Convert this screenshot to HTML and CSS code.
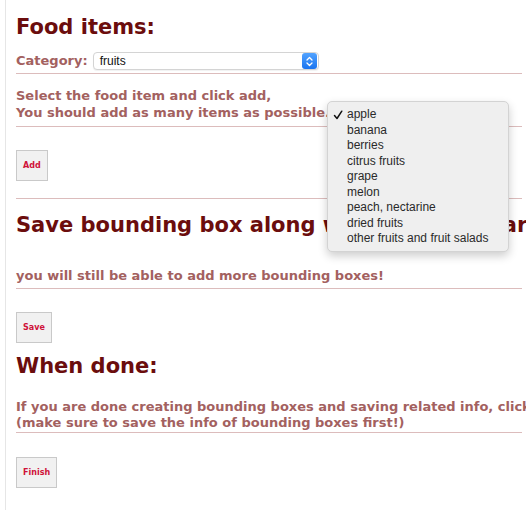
FILE: index.html
```html
<!DOCTYPE html>
<html lang="en">
<head>
<meta charset="utf-8">
<title>Food items</title>
<link rel="stylesheet" href="styles.css">
</head>
<body>
<div class="page">
  <h1 class="title first">Food items:</h1>

  <div class="field-row">
    <span class="label">Category:</span>
    <div class="select">
      <span class="select-value">fruits</span>
      <span class="select-arrow">
        <svg width="9" height="11" viewBox="0 0 9 11"><path d="M2 4 L4.5 1.5 L7 4 M2 7 L4.5 9.5 L7 7" fill="none" stroke="#fff" stroke-width="1.3" stroke-linecap="round" stroke-linejoin="round"/></svg>
      </span>
    </div>
  </div>
  <hr class="rule rule-category">

  <p class="note note-select">Select the food item and click add,<br>You should add as many items as possible.</p>
  <hr class="rule rule-select">

  <button class="btn btn-add">Add</button>
  <hr class="rule rule-add">

  <h1 class="title save-title">Save bounding box along with food item area:</h1>
  <p class="note note-save">you will still be able to add more bounding boxes!</p>
  <hr class="rule rule-save">

  <button class="btn btn-save">Save</button>

  <h1 class="title done-title">When done:</h1>
  <p class="note note-done">If you are done creating bounding boxes and saving related info, click the Finish button<br>(make sure to save the info of bounding boxes first!)</p>
  <hr class="rule rule-done">

  <button class="btn btn-finish">Finish</button>
</div>

<ul class="menu">
  <li class="menu-item checked"><svg class="check" width="10" height="10" viewBox="0 0 10 10"><path d="M1.5 5.5 L4 8.5 L8.8 1.2" fill="none" stroke="#111" stroke-width="1.5" stroke-linecap="round" stroke-linejoin="round"/></svg>apple</li>
  <li class="menu-item">banana</li>
  <li class="menu-item">berries</li>
  <li class="menu-item">citrus fruits</li>
  <li class="menu-item">grape</li>
  <li class="menu-item">melon</li>
  <li class="menu-item">peach, nectarine</li>
  <li class="menu-item">dried fruits</li>
  <li class="menu-item">other fruits and fruit salads</li>
</ul>
</body>
</html>
```

FILE: styles.css
```css
html, body {
  margin: 0;
  padding: 0;
  background: #ffffff;
  overflow: hidden;
}

body {
  width: 526px;
  height: 510px;
  position: relative;
  font-family: "DejaVu Sans", Verdana, sans-serif;
}

.page {
  margin-left: 5px;
  border-left: 1px solid #e6e6e6;
  padding-left: 10px;
  padding-right: 4px;
  min-height: 510px;
  display: flex;
  flex-direction: column;
  align-items: flex-start;
}

.title {
  margin: 0;
  font-size: 21px;
  line-height: 26px;
  font-weight: bold;
  color: #6b0d0d;
  white-space: nowrap;
}

.first { margin-top: 14px; }
.save-title { margin-top: 13px; }
.done-title { margin-top: 10px; }

.field-row {
  margin-top: 12px;
  height: 18px;
  display: flex;
  align-items: center;
  gap: 5px;
}

.label,
.note {
  font-size: 13px;
  font-weight: bold;
  color: #a3615f;
}

.label { line-height: 18px; }

.select {
  width: 224px;
  height: 16px;
  border: 1px solid #d4d4d4;
  border-radius: 4px;
  background: #fff;
  display: flex;
  align-items: center;
  justify-content: space-between;
  box-shadow: 0 1px 1px rgba(0, 0, 0, 0.06);
}

.select-value {
  font-family: "Liberation Sans", Arial, sans-serif;
  font-size: 12px;
  color: #111;
  padding-left: 6px;
}

.select-arrow {
  width: 15px;
  height: 16px;
  margin-right: 1px;
  border-radius: 3px;
  background: linear-gradient(#52a3ff, #1a74f0);
  display: flex;
  align-items: center;
  justify-content: center;
}

.note {
  margin: 0;
  line-height: 17px;
  white-space: nowrap;
}

.rule {
  align-self: stretch;
  border: 0;
  height: 1px;
  margin: 0;
  background: #dcbcbc;
}

.rule-category { margin-top: 3px; }
.note-select { margin-top: 13px; }
.rule-select { margin-top: 5px; }
.btn-add { margin-top: 23px; }
.rule-add { margin-top: 17px; }
.note-save { margin-top: 29px; }
.rule-save { margin-top: 4px; }
.btn-save { margin-top: 23px; }
.note-done { margin-top: 20px; line-height: 16px; }
.rule-done { margin-top: 1px; }
.btn-finish { margin-top: 24px; height: 30px; }

.btn {
  height: 31px;
  padding: 0 6px;
  border: 1px solid #c9c9c9;
  background: #f1f1f1;
  font-family: "DejaVu Sans", Verdana, sans-serif;
  font-size: 8px;
  font-weight: bold;
  color: #cf1239;
}

/* open dropdown list of the category select */
.menu {
  position: absolute;
  left: 327px;
  top: 101px;
  width: 180px;
  margin: 0;
  padding: 5px 0 4px;
  list-style: none;
  background: #efefef;
  border: 1px solid #d3d3d3;
  border-radius: 5px;
  box-shadow: 0 4px 10px rgba(0, 0, 0, 0.2);
  font-family: "Liberation Sans", Arial, sans-serif;
  font-size: 12px;
  color: #2a2a2a;
}

.menu-item {
  height: 15.5px;
  line-height: 15.5px;
  padding-left: 19px;
  position: relative;
  white-space: nowrap;
}

.check {
  position: absolute;
  left: 5px;
  top: 3px;
}
```
